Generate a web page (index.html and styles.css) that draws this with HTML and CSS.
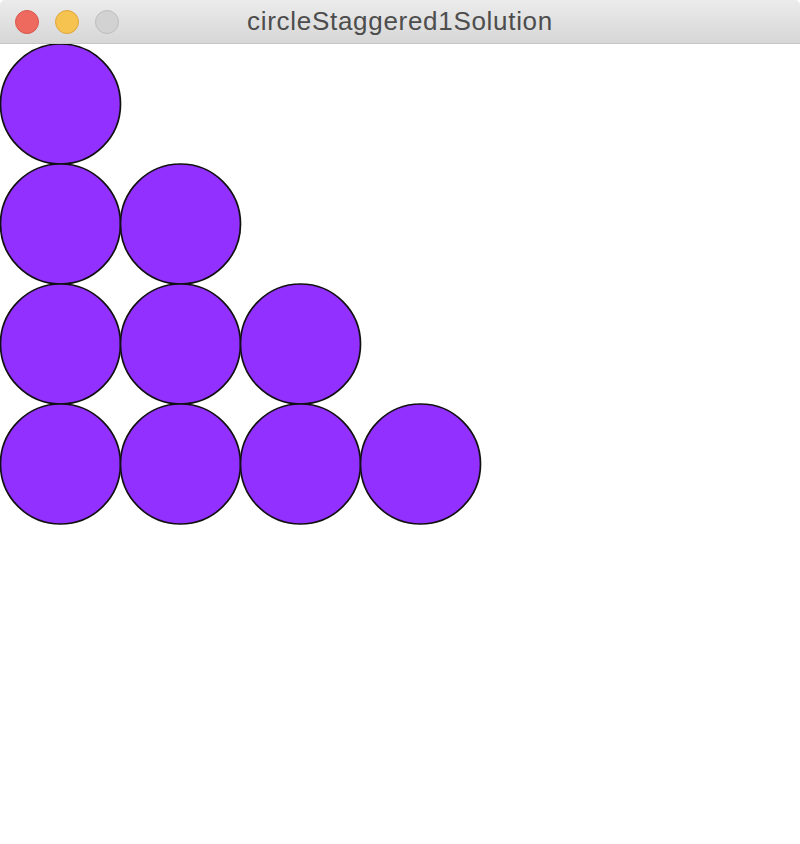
FILE: index.html
```html
<!DOCTYPE html>
<html>
<head>
<meta charset="utf-8">
<title>circleStaggered1Solution</title>
<link rel="stylesheet" href="styles.css">
</head>
<body>
<div class="window">
  <div class="titlebar">
    <div class="lights">
      <span class="light red"></span>
      <span class="light yellow"></span>
      <span class="light gray"></span>
    </div>
    <div class="title">circleStaggered1Solution</div>
  </div>
  <div class="canvas">
    <svg width="800" height="800" viewBox="0 0 800 800" xmlns="http://www.w3.org/2000/svg">
      <g fill="#9130ff" stroke="#111" stroke-width="1.7">
        <circle cx="60.5" cy="60" r="60"/>
        <circle cx="60.5" cy="180" r="60"/>
        <circle cx="180.5" cy="180" r="60"/>
        <circle cx="60.5" cy="300" r="60"/>
        <circle cx="180.5" cy="300" r="60"/>
        <circle cx="300.5" cy="300" r="60"/>
        <circle cx="60.5" cy="420" r="60"/>
        <circle cx="180.5" cy="420" r="60"/>
        <circle cx="300.5" cy="420" r="60"/>
        <circle cx="420.5" cy="420" r="60"/>
      </g>
    </svg>
  </div>
</div>
</body>
</html>
```

FILE: styles.css
```css
html, body {
  margin: 0;
  padding: 0;
  background: #fff;
}
.window {
  width: 800px;
  height: 844px;
  overflow: hidden;
}
.titlebar {
  position: relative;
  height: 43px;
  border-bottom: 1px solid #c6c6c6;
  background: linear-gradient(#ececec, #d6d6d6);
  border-radius: 5px 5px 0 0;
  display: flex;
  align-items: center;
  justify-content: center;
}
.lights {
  position: absolute;
  left: 15px;
  top: 10px;
  display: flex;
  gap: 16px;
}
.light {
  width: 24px;
  height: 24px;
  border-radius: 50%;
  box-sizing: border-box;
}
.red {
  background: #ee6a5f;
  border: 1px solid #d7574d;
}
.yellow {
  background: #f6c250;
  border: 1px solid #dea73c;
}
.gray {
  background: #d2d2d2;
  border: 1px solid #bdbdbd;
}
.title {
  font-family: "Liberation Sans", Arial, sans-serif;
  font-size: 26px;
  letter-spacing: 0.7px;
  color: #4d4d4d;
  line-height: 43px;
}
.canvas {
  display: block;
  line-height: 0;
}
.canvas svg {
  display: block;
}
```
